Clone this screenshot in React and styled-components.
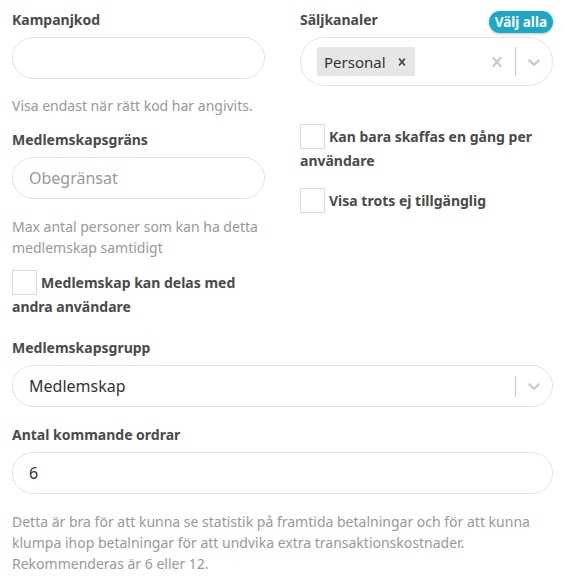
import React from 'react'
import styled, { createGlobalStyle } from 'styled-components'

const Global = createGlobalStyle`
  body {
    margin: 0;
    background: #fff;
    font-family: 'Noto Sans', 'Open Sans', sans-serif;
  }
`

const Page = styled.div`
  padding: 9px 16px 12px 12px;
`

const Columns = styled.div`
  display: grid;
  grid-template-columns: 1fr 1fr;
  column-gap: 35px;
`

const Column = styled.div`
  display: flex;
  flex-direction: column;
`

const LabelRow = styled.div`
  display: flex;
  align-items: flex-start;
  justify-content: space-between;
  height: 21px;
  margin-bottom: 7px;
`

const Label = styled.div`
  font-size: 14px;
  line-height: 21px;
  font-weight: 700;
  color: #4a4a4a;
  margin-top: ${(p) => p.$top || 0}px;
  margin-bottom: ${(p) => (p.$inRow ? 0 : 7)}px;
`

const Pill = styled.button`
  border: none;
  background: #1ba9c7;
  color: #fff;
  font-family: inherit;
  font-weight: 700;
  font-size: 13.5px;
  line-height: 22px;
  height: 22px;
  padding: 0 6px;
  border-radius: 11px;
  box-shadow: 0 1px 3px rgba(0, 0, 0, 0.25);
  margin-top: 2px;
`

const Input = styled.input`
  box-sizing: border-box;
  width: 100%;
  height: 42px;
  border: 1px solid #e4e4e4;
  border-radius: 21px;
  padding: 0 16px;
  font-family: inherit;
  font-size: 16px;
  color: #333;
  outline: none;
  &::placeholder {
    color: #9a9a9a;
  }
`

const Help = styled.div`
  font-size: 14px;
  line-height: 21px;
  color: #999;
  margin-top: ${(p) => p.$top || 16}px;
`

const Control = styled.div`
  box-sizing: border-box;
  display: flex;
  align-items: center;
  width: 100%;
  height: ${(p) => p.$h || 42}px;
  border: 1px solid #e4e4e4;
  border-radius: 999px;
  padding-left: ${(p) => p.$pl || 16}px;
`

const Values = styled.div`
  flex: 1;
  display: flex;
  align-items: center;
  font-size: 16px;
  color: #333;
`

const Chip = styled.div`
  display: flex;
  align-items: center;
  background: #e6e6e6;
  border-radius: 2px;
  height: 29px;
  padding-left: 7px;
  font-size: 15px;
  color: #333;
`

const ChipRemove = styled.span`
  display: flex;
  align-items: center;
  padding: 0 6px 0 9px;
  color: #444;
`

const Indicator = styled.div`
  width: 36px;
  display: flex;
  justify-content: center;
  align-items: center;
  color: #ccc;
`

const Separator = styled.span`
  width: 1px;
  height: ${(p) => p.$h || 21}px;
  background: #ccc;
`

const CheckRow = styled.div`
  font-size: 14px;
  line-height: 23px;
  font-weight: 700;
  color: #4a4a4a;
  margin-top: ${(p) => p.$top || 0}px;
`

const Box = styled.span`
  display: inline-block;
  box-sizing: border-box;
  width: 25px;
  height: 25px;
  border: 1px solid #dcdcdc;
  vertical-align: middle;
  margin: -3px 4px 0 0;
`

const Full = styled.div`
  display: flex;
  flex-direction: column;
`

const Cross = ({ size = 20 }) => (
  <svg width={size} height={size} viewBox="0 0 20 20" fill="currentColor">
    <path d="M14.348 14.849c-0.469 0.469-1.229 0.469-1.697 0l-2.651-3.030-2.651 3.029c-0.469 0.469-1.229 0.469-1.697 0-0.469-0.469-0.469-1.229 0-1.697l2.758-3.15-2.759-3.152c-0.469-0.469-0.469-1.228 0-1.697s1.228-0.469 1.697 0l2.652 3.031 2.651-3.031c0.469-0.469 1.228-0.469 1.697 0s0.469 1.229 0 1.697l-2.758 3.152 2.758 3.15c0.469 0.469 0.469 1.229 0 1.698z" />
  </svg>
)

const Chevron = () => (
  <svg width="20" height="20" viewBox="0 0 20 20" fill="currentColor">
    <path d="M4.516 7.548c0.436-0.446 1.043-0.481 1.576 0l3.908 3.747 3.908-3.747c0.533-0.481 1.141-0.446 1.574 0 0.436 0.445 0.408 1.197 0 1.615-0.406 0.418-4.695 4.502-4.695 4.502-0.217 0.223-0.502 0.335-0.787 0.335s-0.57-0.112-0.789-0.335c0 0-4.287-4.084-4.695-4.502s-0.436-1.17 0-1.615z" />
  </svg>
)

export default function App() {
  return (
    <Page>
      <Global />
      <Columns>
        <Column>
          <Label>Kampanjkod</Label>
          <Input />
          <Help>Visa endast när rätt kod har angivits.</Help>
          <Label $top={13}>Medlemskapsgräns</Label>
          <Input placeholder="Obegränsat" />
          <Help $top={17}>Max antal personer som kan ha detta medlemskap samtidigt</Help>
          <CheckRow $top={13}>
            <Box />
            Medlemskap kan delas med andra användare
          </CheckRow>
        </Column>
        <Column>
          <LabelRow>
            <Label $inRow>Säljkanaler</Label>
            <Pill>Välj alla</Pill>
          </LabelRow>
          <Control $h={49} $pl={16}>
            <Values>
              <Chip>
                Personal
                <ChipRemove>
                  <Cross size={14} />
                </ChipRemove>
              </Chip>
            </Values>
            <Indicator>
              <Cross />
            </Indicator>
            <Separator $h={29} />
            <Indicator>
              <Chevron />
            </Indicator>
          </Control>
          <CheckRow $top={39}>
            <Box />
            Kan bara skaffas en gång per användare
          </CheckRow>
          <CheckRow $top={17}>
            <Box />
            Visa trots ej tillgänglig
          </CheckRow>
        </Column>
      </Columns>
      <Full>
        <Label $top={19}>Medlemskapsgrupp</Label>
        <Control>
          <Values>Medlemskap</Values>
          <Separator />
          <Indicator>
            <Chevron />
          </Indicator>
        </Control>
        <Label $top={17}>Antal kommande ordrar</Label>
        <Input defaultValue="6" />
        <Help $top={17}>
          Detta är bra för att kunna se statistik på framtida betalningar och för att kunna klumpa ihop
          betalningar för att undvika extra transaktionskostnader. Rekommenderas är 6 eller 12.
        </Help>
      </Full>
    </Page>
  )
}
